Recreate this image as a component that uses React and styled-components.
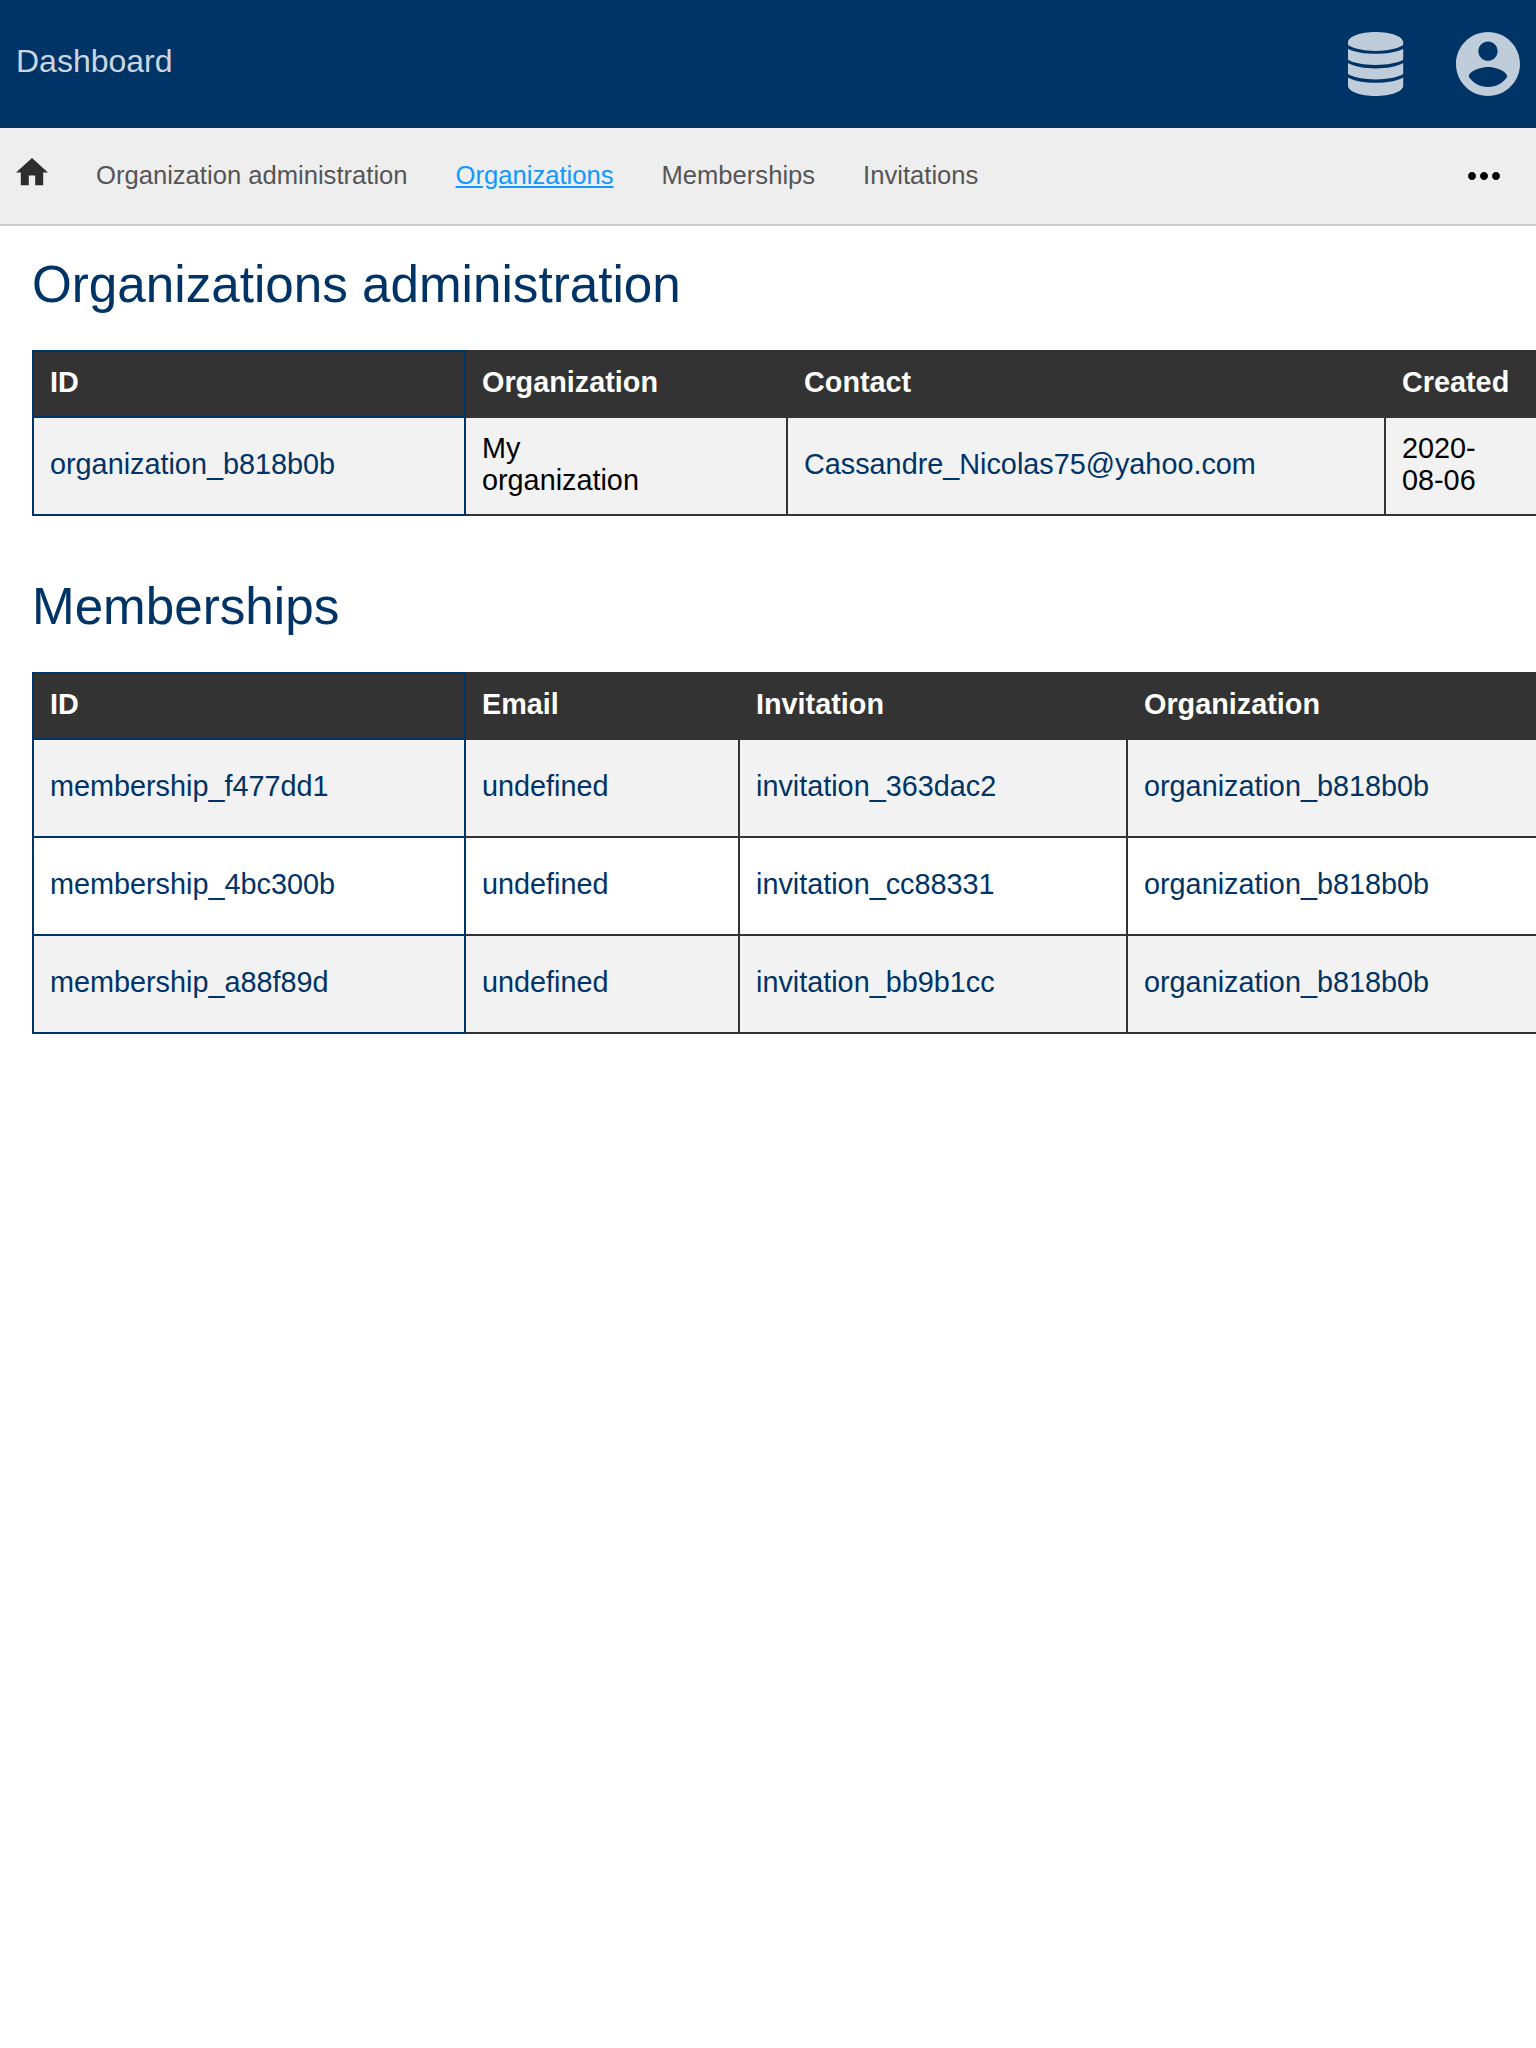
import React from 'react';
import styled, { createGlobalStyle } from 'styled-components';

const navy = '#003366';
const charcoal = '#333333';

const GlobalStyle = createGlobalStyle`
  body {
    margin: 0;
    background: #fff;
    color: #000;
    font-family: "Liberation Sans", Arial, sans-serif;
    font-size: 28.8px;
    overflow: hidden;
  }
`;

const Page = styled.div`
  min-height: 2048px;
  overflow: hidden;
`;

const Header = styled.header`
  display: flex;
  align-items: center;
  justify-content: space-between;
  box-sizing: border-box;
  height: 128px;
  padding: 0 16px;
  background: ${navy};
`;

const Brand = styled.a`
  color: #ccd6e0;
  font-size: 32px;
  line-height: 36px;
  padding-bottom: 6px;
`;

const HeaderIcons = styled.div`
  display: flex;
  align-items: center;
  gap: 52.4px;
  color: #bfccd9;
`;

const Icon = styled.svg`
  display: block;
  flex: none;
  width: ${(p) => p.$w}px;
  height: ${(p) => p.$h}px;
  fill: currentColor;
`;

const Nav = styled.nav`
  display: flex;
  align-items: center;
  height: 96px;
  padding: 0 36px 0 16px;
  background: #eeeeee;
  border-bottom: 2px solid #cccccc;
`;

const HomeLink = styled.a`
  color: #2e2e2e;
  padding-bottom: 8px;
`;

const NavLinks = styled.div`
  display: flex;
  flex: 1;
  gap: 48px;
  margin-left: 48px;
`;

const NavLink = styled.a`
  color: ${(p) => (p.$active ? '#1199ff' : '#555555')};
  font-size: 25.6px;
  line-height: 30px;
  text-decoration: ${(p) => (p.$active ? 'underline' : 'none')};
  padding-bottom: 2px;
`;

const Main = styled.main`
  display: flex;
  flex-direction: column;
  gap: 61px;
  padding: 29px 0 0 32px;
`;

const Title = styled.h1`
  margin: 0 0 35px;
  color: ${navy};
  font-size: 51.2px;
  font-weight: 400;
  line-height: 60px;
`;

const Table = styled.table`
  width: ${(p) => p.$width}px;
  table-layout: fixed;
  border-collapse: collapse;
  line-height: 32px;
`;

const Col = styled.col`
  width: ${(p) => p.$width}px;
`;

const HeadCell = styled.th`
  box-sizing: border-box;
  height: 66px;
  padding: 0 16px 4px;
  border: 2px solid ${charcoal};
  background: ${charcoal};
  color: #fff;
  text-align: left;
  &:first-child {
    border-color: ${navy};
  }
`;

const Row = styled.tr`
  height: 98px;
  background: ${(p) => (p.$shaded ? '#f2f2f2' : '#ffffff')};
`;

const Cell = styled.td`
  padding: 0 16px 4px;
  border: 2px solid ${charcoal};
  white-space: pre-line;
  &:first-child {
    border-color: ${navy};
  }
`;

const Link = styled.a`
  color: ${navy};
`;

function DataTable({ title, columns, rows }) {
  const total = columns.reduce((sum, c) => sum + c.width, 0);
  return (
    <section>
      <Title>{title}</Title>
      <Table $width={total + 2}>
        <colgroup>
          {columns.map((c) => <Col key={c.label} $width={c.width} />)}
        </colgroup>
        <thead>
          <tr>{columns.map((c) => <HeadCell key={c.label}>{c.label}</HeadCell>)}</tr>
        </thead>
        <tbody>
          {rows.map((row, i) => (
            <Row key={row[0]} $shaded={i % 2 === 0}>
              {row.map((value, j) => (
                <Cell key={columns[j].label}>
                  {columns[j].plain ? value : <Link>{value}</Link>}
                </Cell>
              ))}
            </Row>
          ))}
        </tbody>
      </Table>
    </section>
  );
}

const organizationColumns = [
  { label: 'ID', width: 432 },
  { label: 'Organization', width: 322, plain: true },
  { label: 'Contact', width: 598 },
  { label: 'Created', width: 220, plain: true },
];

const membershipColumns = [
  { label: 'ID', width: 432 },
  { label: 'Email', width: 274 },
  { label: 'Invitation', width: 388 },
  { label: 'Organization', width: 460 },
];

export default function App() {
  return (
    <>
      <GlobalStyle />
      <Page>
        <Header>
          <Brand>Dashboard</Brand>
          <HeaderIcons>
            <Icon $w={55.2} $h={64} viewBox="0 0 56 64" preserveAspectRatio="none">
              <path d="M28 0C43.5 0 56 4.6 56 10.2v2.9C50.5 17 39.5 18.9 28 18.9S5.5 17 0 13.1v-2.9C0 4.6 12.500 0 28 0z" />
              <path d="M0 16.700C6 20.100 16.500 21.800 28 21.800s22-1.700 28-5.100v11.100C50.500 31 39.500 33 28 33S5.500 31 0 27.800z" />
              <path d="M0 31C6 34.600 16.500 36.400 28 36.400S50 34.600 56 31v11.100C50.500 45.500 39.500 47.400 28 47.400S5.500 45.500 0 42.100z" />
              <path d="M0 45.400C6 48.900 16.500 50.700 28 50.700s22-1.800 28-5.300v8.400C56 59.500 43.500 64 28 64S0 59.500 0 53.800z" />
            </Icon>
            <Icon $w={64} $h={64} viewBox="2 2 20 20">
              <path d="M12 2C6.480 2 2 6.480 2 12s4.480 10 10 10 10-4.480 10-10S17.520 2 12 2zm0 3c1.660 0 3 1.340 3 3s-1.340 3-3 3-3-1.340-3-3 1.340-3 3-3zm0 14.200c-2.500 0-4.710-1.280-6-3.220.03-1.990 4-3.080 6-3.080 1.990 0 5.970 1.090 6 3.080-1.290 1.940-3.500 3.220-6 3.220z" />
            </Icon>
          </HeaderIcons>
        </Header>
        <Nav>
          <HomeLink>
            <Icon $w={32} $h={27.2} viewBox="2 3 20 17">
              <path d="M10 20v-6h4v6h5v-8h3L12 3 2 12h3v8z" />
            </Icon>
          </HomeLink>
          <NavLinks>
            <NavLink>Organization administration</NavLink>
            <NavLink $active>Organizations</NavLink>
            <NavLink>Memberships</NavLink>
            <NavLink>Invitations</NavLink>
          </NavLinks>
          <Icon $w={32} $h={8} viewBox="4 10 16 4">
            <path d="M6 10c-1.100 0-2 .9-2 2s.9 2 2 2 2-.9 2-2-.9-2-2-2zm12 0c-1.100 0-2 .9-2 2s.9 2 2 2 2-.9 2-2-.9-2-2-2zm-6 0c-1.100 0-2 .9-2 2s.9 2 2 2 2-.9 2-2-.9-2-2-2z" />
          </Icon>
        </Nav>
        <Main>
          <DataTable
            title="Organizations administration"
            columns={organizationColumns}
            rows={[
              ['organization_b818b0b', 'My\norganization', 'Cassandre_Nicolas75@yahoo.com', '2020-\n08-06'],
            ]}
          />
          <DataTable
            title="Memberships"
            columns={membershipColumns}
            rows={[
              ['membership_f477dd1', 'undefined', 'invitation_363dac2', 'organization_b818b0b'],
              ['membership_4bc300b', 'undefined', 'invitation_cc88331', 'organization_b818b0b'],
              ['membership_a88f89d', 'undefined', 'invitation_bb9b1cc', 'organization_b818b0b'],
            ]}
          />
        </Main>
      </Page>
    </>
  );
}
